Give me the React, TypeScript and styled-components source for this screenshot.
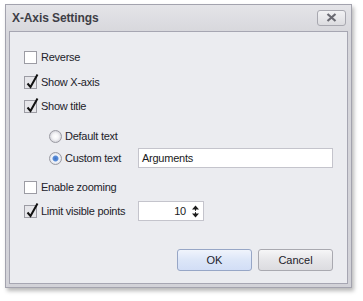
import styled, { createGlobalStyle } from "styled-components";

const GlobalStyle = createGlobalStyle`
  html, body {
    margin: 0;
    padding: 0;
    background: #ffffff;
    font-family: "Liberation Sans", Arial, sans-serif;
  }
`;

const Page = styled.div`
  width: 363px;
  height: 301px;
  padding: 4px 0 0 5px;
  box-sizing: border-box;
`;

const Window = styled.div`
  width: 347px;
  height: 284px;
  box-sizing: border-box;
  display: flex;
  flex-direction: column;
  border: 1px solid #a3a3ae;
  background: linear-gradient(#e4e4e8, #d6d6db 30px, #d2d2d8);
  padding: 0 3px 3px 3px;
  box-shadow: 2px 3px 4px rgba(0, 0, 0, 0.28);
`;

const TitleBar = styled.div`
  height: 26px;
  display: flex;
  align-items: center;
  justify-content: space-between;
  padding: 0 2px 0 3px;
`;

const Title = styled.span`
  font-size: 12px;
  font-weight: bold;
  color: #3e3e46;
  letter-spacing: -0.1px;
`;

const CloseButton = styled.div`
  width: 27px;
  height: 14px;
  border: 1px solid #a8a8b0;
  border-radius: 3px;
  background: linear-gradient(#f2f2f4, #dcdce0);
  display: flex;
  align-items: center;
  justify-content: center;
  margin-top: -1px;
`;

const Panel = styled.div`
  flex: 1;
  border: 1px solid #a6a6b2;
  background: #ebecf0;
  padding: 15px 14px 0 14px;
  display: flex;
  flex-direction: column;
  color: #22222a;
  font-size: 11px;
  letter-spacing: -0.25px;
`;

const Row = styled.div<{ $gap: number; $indent?: number }>`
  height: 20px;
  display: flex;
  align-items: center;
  margin-top: ${(p) => p.$gap}px;
  margin-left: ${(p) => p.$indent ?? 0}px;
`;

const Lead = styled.div<{ $width?: number }>`
  display: flex;
  align-items: center;
  width: ${(p) => (p.$width ? `${p.$width}px` : "auto")};
  flex-shrink: 0;
`;

const Box = styled.div<{ $checked?: boolean }>`
  position: relative;
  width: 11px;
  height: 11px;
  border: 1px solid #9c9ca4;
  background: ${(p) => (p.$checked ? "#e6e6ea" : "#ffffff")};
  margin-right: 4px;
  flex-shrink: 0;
`;

const CheckMark = styled.svg`
  position: absolute;
  left: 1px;
  top: -4px;
`;

const Radio = styled.div<{ $checked?: boolean }>`
  width: 11px;
  height: 11px;
  border-radius: 50%;
  border: 1px solid #9a9aa2;
  background: ${(p) =>
    p.$checked
      ? "radial-gradient(circle, #3f74c8 0, #5b8ed8 2.5px, #f4f6fa 3.5px, #dfe2ea 5.5px)"
      : "radial-gradient(circle, #ffffff 0, #f4f4f6 3px, #d8d8de 5.5px)"};
  margin-right: 3px;
  flex-shrink: 0;
`;

const TextInput = styled.div`
  flex: 1;
  height: 18px;
  border: 1px solid #c4c4cc;
  background: #ffffff;
  display: flex;
  align-items: center;
  padding-left: 3px;
  color: #1a1a22;
`;

const Spin = styled.div`
  width: 60px;
  height: 18px;
  border: 1px solid #c4c4cc;
  background: #ffffff;
  display: flex;
  align-items: center;
  justify-content: flex-end;
  padding-right: 4px;
  color: #1a1a22;
`;

const SpinValue = styled.span`
  margin-right: 6px;
`;

const Footer = styled.div`
  display: flex;
  justify-content: flex-end;
  gap: 6px;
  margin-top: 28px;
  letter-spacing: 0;
`;

const Button = styled.div<{ $primary?: boolean }>`
  width: 73px;
  height: 20px;
  border: 1px solid ${(p) => (p.$primary ? "#97a6c6" : "#a9a9b0")};
  border-radius: 3px;
  background: ${(p) =>
    p.$primary
      ? "linear-gradient(#f0f4fc, #dce6f8 50%, #d2def6)"
      : "linear-gradient(#f6f6f7, #e6e6e9 50%, #dcdce0)"};
  display: flex;
  align-items: center;
  justify-content: center;
  font-size: 11px;
  color: #22222a;
`;

function Check() {
  return (
    <CheckMark width="13" height="16" viewBox="0 0 13 16">
      <path d="M1.5 10.5 L4.5 14 L11.5 1.5" fill="none" stroke="#111" strokeWidth="2" />
    </CheckMark>
  );
}

function CheckRow({ label, checked, gap, children, width }: {
  label: string;
  checked?: boolean;
  gap: number;
  width?: number;
  children?: React.ReactNode;
}) {
  return (
    <Row $gap={gap}>
      <Lead $width={width}>
        <Box $checked={checked}>{checked && <Check />}</Box>
        {label}
      </Lead>
      {children}
    </Row>
  );
}

export default function App() {
  return (
    <>
      <GlobalStyle />
      <Page>
        <Window>
          <TitleBar>
            <Title>X-Axis Settings</Title>
            <CloseButton>
              <svg width="11" height="9" viewBox="0 0 11 9">
                <path d="M1.5 1 L9.5 8 M9.5 1 L1.5 8" stroke="#6a6a72" strokeWidth="2.2" />
              </svg>
            </CloseButton>
          </TitleBar>
          <Panel>
            <CheckRow label="Reverse" gap={0} />
            <CheckRow label="Show X-axis" checked gap={5} />
            <CheckRow label="Show title" checked gap={4} />
            <Row $gap={10} $indent={25}>
              <Lead>
                <Radio />
                Default text
              </Lead>
            </Row>
            <Row $gap={2} $indent={25}>
              <Lead $width={89}>
                <Radio $checked />
                Custom text
              </Lead>
              <TextInput>Arguments</TextInput>
            </Row>
            <CheckRow label="Enable zooming" gap={9} />
            <CheckRow label="Limit visible points" checked gap={4} width={114}>
              <Spin>
                <SpinValue>10</SpinValue>
                <svg width="7" height="13" viewBox="0 0 7 13">
                  <path d="M3.5 0.5 L7 4.5 L0 4.5 Z M0 8.5 L7 8.5 L3.5 12.5 Z" fill="#1a1a1a" />
                  <path d="M3.5 4 V5.8 M3.5 7.2 V9" stroke="#1a1a1a" strokeWidth="1" />
                </svg>
              </Spin>
            </CheckRow>
            <Footer>
              <Button $primary>OK</Button>
              <Button>Cancel</Button>
            </Footer>
          </Panel>
        </Window>
      </Page>
    </>
  );
}
